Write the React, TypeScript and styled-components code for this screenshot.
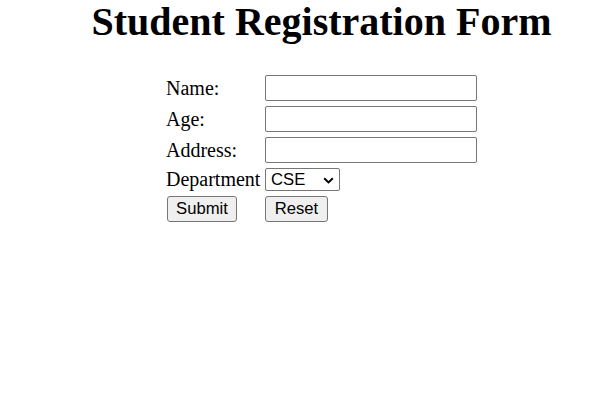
import React from "react";
import styled, { createGlobalStyle } from "styled-components";

const Global = createGlobalStyle`
  html, body { margin: 0; padding: 0; background: #ffffff; }
  body { font-family: "Liberation Serif", "Times New Roman", serif; color: #000; }
`;

const Page = styled.div`
  padding-left: 43px;
  display: flex;
  flex-direction: column;
  align-items: center;
`;

const Title = styled.h1`
  margin: 0 0 31px;
  font-family: "Liberation Serif", "Times New Roman", serif;
  font-size: 40px;
  font-weight: bold;
  line-height: 44px;
`;

const Form = styled.form`
  display: grid;
  grid-template-columns: 99px auto;
  row-gap: 5px;
  align-items: center;
`;

const Label = styled.label`
  font-size: 20px;
  line-height: 23px;
`;

const TextInput = styled.input`
  box-sizing: border-box;
  width: 212px;
  height: 26px;
  border: 1px solid #767676;
  border-radius: 2px;
  padding: 1px 2px;
  font-family: "Liberation Sans", Arial, sans-serif;
  font-size: 16.67px;
  background: #fff;
`;

const SelectWrap = styled.div`
  position: relative;
  width: 75px;
  height: 23px;
`;

const Select = styled.select`
  appearance: none;
  -webkit-appearance: none;
  box-sizing: border-box;
  width: 75px;
  height: 23px;
  border: 1px solid #767676;
  border-radius: 2px;
  font-family: "Liberation Sans", Arial, sans-serif;
  font-size: 16.67px;
  background: #fff;
  color: #000;
  padding: 0 0 0 5px;
  margin: 0;
`;

const Chevron = styled.svg`
  position: absolute;
  left: 58px;
  top: 9px;
  pointer-events: none;
`;

const Cell = styled.div<{ $indent?: number }>`
  display: flex;
  padding-left: ${(p) => p.$indent ?? 0}px;
`;

const Button = styled.button<{ $w: number }>`
  box-sizing: border-box;
  width: ${(p) => p.$w}px;
  height: 26px;
  border: 1px solid #767676;
  border-radius: 3px;
  background: #efefef;
  font-family: "Liberation Sans", Arial, sans-serif;
  font-size: 16.67px;
  color: #000;
  padding: 0;
`;

export default function App() {
  return (
    <>
      <Global />
      <Page>
        <Title>Student Registration Form</Title>
        <Form onSubmit={(e) => e.preventDefault()}>
          <Label htmlFor="name">Name:</Label>
          <TextInput id="name" type="text" />
          <Label htmlFor="age">Age:</Label>
          <TextInput id="age" type="text" />
          <Label htmlFor="address">Address:</Label>
          <TextInput id="address" type="text" />
          <Label htmlFor="dept">Department</Label>
          <Cell>
            <SelectWrap>
              <Select id="dept" defaultValue="CSE">
                <option>CSE</option>
                <option>ECE</option>
                <option>EEE</option>
                <option>MECH</option>
              </Select>
              <Chevron width="11" height="7" viewBox="0 0 11 7">
                <path d="M1.2 1.2 L5.5 5.4 L9.8 1.2" fill="none" stroke="#000" strokeWidth="2" />
              </Chevron>
            </SelectWrap>
          </Cell>
          <Cell $indent={1}>
            <Button $w={70} type="submit">Submit</Button>
          </Cell>
          <Cell>
            <Button $w={63} type="reset">Reset</Button>
          </Cell>
        </Form>
      </Page>
    </>
  );
}
